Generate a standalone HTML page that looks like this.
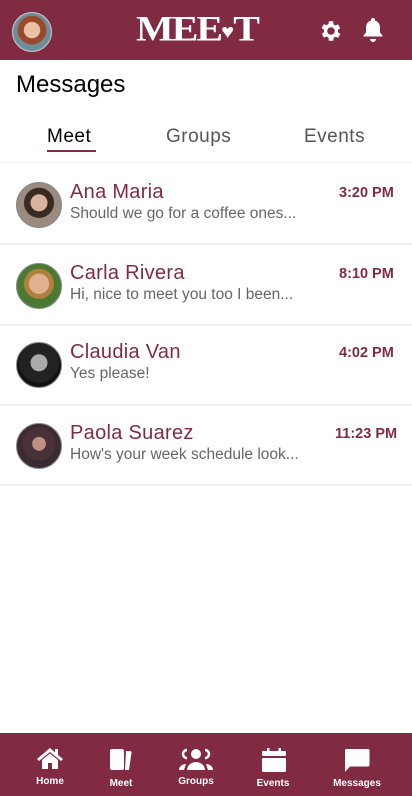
<!DOCTYPE html>
<html><head><meta charset="utf-8"><style>
*{margin:0;padding:0;box-sizing:border-box}
body{width:412px;height:796px;background:#fff;font-family:"Liberation Sans",sans-serif;position:relative;overflow:hidden}
.hdr{position:absolute;left:0;top:0;width:412px;height:60px;background:#812b42}
.abs{position:absolute}
.av{position:absolute;width:46px;height:46px;border-radius:50%;border:1px solid #888}
.name{position:absolute;left:70px;font-size:20px;color:#812b42;letter-spacing:0.3px}
.msg{position:absolute;left:70px;font-size:15.5px;color:#666}
.time{position:absolute;font-size:14.5px;font-weight:bold;color:#812b42}
.div{position:absolute;left:0;width:412px;height:2px;background:#f0f0f0}
.nav{position:absolute;left:0;top:733px;width:412px;height:63px;background:#812b42}
.nl{position:absolute;top:778px;font-size:10px;font-weight:bold;color:#fff;transform:translateX(-50%)}
</style></head><body>
<div class="hdr"></div>
<div class="abs" style="left:12px;top:12px;width:40px;height:40px;border-radius:50%;background:radial-gradient(circle at 50% 45%,#e9c0a8 0 28%,#9a4a2a 30% 50%,#6d8f9a 52%);border:1px solid #ccc"></div>
<div class="abs" style="left:136px;top:9px;font-family:'Liberation Serif',serif;font-weight:bold;font-size:40px;color:#fff;letter-spacing:-2px;line-height:44px;transform:scaleY(0.9);transform-origin:top left">MEE<span style="font-size:22px;letter-spacing:-1px;vertical-align:3px">♥</span>T</div>
<svg class="abs" style="left:318px;top:18px" width="26" height="26" viewBox="0 0 24 24"><path fill="#fff" d="M19.4 13a7.5 7.5 0 0 0 0-2l2.1-1.6-2-3.5-2.5 1a7.6 7.6 0 0 0-1.7-1L15 3h-4l-.4 2.7a7.6 7.6 0 0 0-1.7 1l-2.5-1-2 3.5L6.6 11a7.5 7.5 0 0 0 0 2l-2.1 1.6 2 3.5 2.5-1a7.6 7.6 0 0 0 1.7 1L11 21h4l.4-2.7a7.6 7.6 0 0 0 1.7-1l2.5 1 2-3.5zM13 15.5a3.5 3.5 0 1 1 0-7 3.5 3.5 0 0 1 0 7z" transform="translate(-1 0)"/></svg>
<svg class="abs" style="left:361px;top:16px" width="24" height="26" viewBox="0 0 24 26"><path fill="#fff" d="M12 2a2 2 0 0 1 2 2v.5c3 .9 5 3.6 5 7v5l2.5 3v1h-19v-1L5 16.5v-5c0-3.4 2-6.1 5-7V4a2 2 0 0 1 2-2zM9 23h6a3 3 0 0 1-6 0z"/></svg>
<div class="abs" style="left:16px;top:71px;font-size:24px;color:#000">Messages</div>
<div class="abs" style="left:47px;top:126px;font-size:19px;color:#000;letter-spacing:.5px">Meet</div>
<div class="abs" style="left:47px;top:150px;width:49px;height:2px;background:#812b42"></div>
<div class="abs" style="left:166px;top:126px;font-size:19px;color:#555;letter-spacing:.5px">Groups</div>
<div class="abs" style="left:304px;top:126px;font-size:19px;color:#555;letter-spacing:.5px">Events</div>
<div class="div" style="top:162px;height:1px"></div>

<div class="av" style="left:16px;top:182px;background:radial-gradient(circle at 50% 45%,#d9b39c 0 25%,#3a2a22 27% 45%,#9a8a80 47%)"></div>
<div class="name" style="top:181px">Ana Maria</div>
<div class="msg" style="top:205px">Should we go for a coffee ones...</div>
<div class="time" style="left:339px;top:185px">3:20 PM</div>
<div class="div" style="top:243px"></div>

<div class="av" style="left:16px;top:263px;background:radial-gradient(circle at 50% 45%,#e0b090 0 30%,#b08040 32% 45%,#4a7a30 47%)"></div>
<div class="name" style="top:262px">Carla Rivera</div>
<div class="msg" style="top:286px">Hi, nice to meet you too I been...</div>
<div class="time" style="left:339px;top:266px">8:10 PM</div>
<div class="div" style="top:324px"></div>

<div class="av" style="left:16px;top:342px;background:radial-gradient(circle at 50% 45%,#aaa 0 25%,#222 27% 60%,#111 62%)"></div>
<div class="name" style="top:341px">Claudia Van</div>
<div class="msg" style="top:365px">Yes please!</div>
<div class="time" style="left:339px;top:345px">4:02 PM</div>
<div class="div" style="top:404px"></div>

<div class="av" style="left:16px;top:423px;background:radial-gradient(circle at 50% 45%,#c09080 0 20%,#4a3038 22% 50%,#3a2a34 52%)"></div>
<div class="name" style="top:422px">Paola Suarez</div>
<div class="msg" style="top:446px">How's your week schedule look...</div>
<div class="time" style="left:335px;top:426px">11:23 PM</div>
<div class="div" style="top:484px"></div>

<div class="nav"></div>
<svg class="abs" style="left:36px;top:746px" width="28" height="24" viewBox="0 0 28 24"><path fill="#fff" d="M14 2 1 13l2 2 11-9 11 9 2-2-5-4V3h-3v3.5zM6 14v9h6v-6h4v6h6v-9l-8-6.5z"/></svg>
<svg class="abs" style="left:108px;top:748px" width="26" height="24" viewBox="0 0 26 24"><rect x="2" y="1" width="14" height="21" rx="2" fill="#fff"/><path fill="#fff" d="M18 3h4a1.5 1.5 0 0 1 1.5 1.7L21 22h-4z"/></svg>
<svg class="abs" style="left:178px;top:747px" width="36" height="24" viewBox="0 0 36 24"><circle cx="18" cy="7" r="5" fill="#fff"/><path fill="#fff" d="M9 23a9 8 0 0 1 18 0z"/><path fill="none" stroke="#fff" stroke-width="2.5" d="M9 3a4 4 0 0 0 0 8M27 3a4 4 0 0 1 0 8"/><path fill="#fff" d="M1 23a7 6 0 0 1 7-6l-2 6zM35 23a7 6 0 0 0-7-6l2 6z"/></svg>
<svg class="abs" style="left:261px;top:747px" width="26" height="26" viewBox="0 0 26 26"><rect x="6" y="1" width="2.5" height="5" fill="#fff"/><rect x="17.5" y="1" width="2.5" height="5" fill="#fff"/><rect x="1" y="4" width="24" height="5" rx="1" fill="#fff"/><rect x="1" y="11" width="24" height="14" rx="1.5" fill="#fff"/></svg>
<svg class="abs" style="left:343px;top:748px" width="28" height="26" viewBox="0 0 28 26"><path fill="#fff" d="M3 1h22a1.5 1.5 0 0 1 1.5 1.5V17a1.5 1.5 0 0 1-1.5 1.5H7L2 24V2.5A1.5 1.5 0 0 1 3 1z"/></svg>
<div class="nl" style="left:50px;top:776px">Home</div>
<div class="nl" style="left:121px">Meet</div>
<div class="nl" style="left:196px;top:776px">Groups</div>
<div class="nl" style="left:273px">Events</div>
<div class="nl" style="left:357px">Messages</div>
</body></html>
